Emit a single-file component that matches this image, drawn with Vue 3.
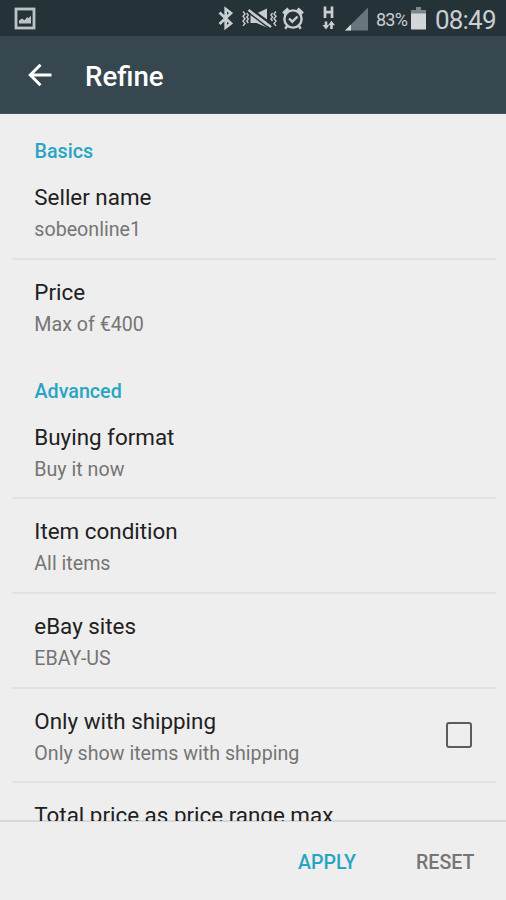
<script setup>
const sections = [
  {
    name: 'Basics',
    rows: [
      { title: 'Seller name', value: 'sobeonline1' },
      { title: 'Price', value: 'Max of €400' },
    ],
  },
  {
    name: 'Advanced',
    rows: [
      { title: 'Buying format', value: 'Buy it now' },
      { title: 'Item condition', value: 'All items' },
      { title: 'eBay sites', value: 'EBAY-US' },
      { title: 'Only with shipping', value: 'Only show items with shipping', checkbox: true },
      { title: 'Total price as price range max', value: '' },
    ],
  },
]
</script>

<template>
  <div class="screen">
    <div class="status">
      <svg class="picture" width="22" height="24" viewBox="0 0 22 24">
        <rect x="2" y="2" width="18" height="19" fill="none" stroke="#bcc3c7" stroke-width="2.8" />
        <path d="M5 16.5V13.5l3-2 2.6 1.8 2.6-3.3 1.4 1.2L17 8.5v8z" fill="#bcc3c7" />
      </svg>
      <svg class="icons" width="164" height="36" viewBox="0 0 164 36">
        <g fill="none" stroke="#c9ced0">
          <path d="M14.5 12.5l11.5 11-5.3 4V9l5.3 4-11.5 11" stroke-width="2.7" />
          <path d="M38 11.500l2 2.400-2 2.400 2 2.400-2 2.400 2 2.400-2 2.400M41.800 13l1.500 2-1.500 2 1.500 2-1.500 2 1.500 2" stroke-width="1.4" />
          <path d="M71 11.500l-2 2.400 2 2.400-2 2.400 2 2.400-2 2.400 2 2.400M67.500 13l-1.500 2 1.500 2-1.500 2 1.500 2" stroke-width="1.4" />
        </g>
        <path d="M45.500 13.500h6L62 8.500v19L51.500 23h-6z" fill="#c9ced0" />
        <path d="M45 8.500L67.500 25" stroke="#253238" stroke-width="2.5" />
        <path d="M43.500 10L66 27" stroke="#c9ced0" stroke-width="2.4" />
        <path d="M43 12.300L64.500 28.600" stroke="#253238" stroke-width="1.5" />
        <g fill="none" stroke="#c9ced0">
          <circle cx="88" cy="19" r="8.6" stroke-width="2.4" />
          <path d="M78.200 13.500l5.200-4.800M97.800 13.500l-5.200-4.800" stroke-width="3.200" />
          <path d="M82.500 25.500l-2.300 3.200M93.500 25.500l2.300 3.200M84 18.500l3.300 3.200 5.200-5.200" stroke-width="2.400" />
          <path d="M120 6.500v11.500M127 6.500v11.500M120 12.200h7" stroke-width="2.700" />
          <path d="M121 21.500v5M126.500 29v-5" stroke-width="2.600" />
        </g>
        <path d="M117.500 25h7L121 29.500zM123 25.200h7L126.500 20.700z" fill="#c9ced0" />
        <path d="M140 30.500L163 7.500v23z" fill="#69757b" />
        <path d="M140 30.500l6-6v6z" fill="#d4d8da" />
      </svg>
      <span class="percent">83%</span>
      <svg class="battery" width="15" height="24" viewBox="0 0 15 24">
        <path d="M0 3h5V0h5v3h5v5H0z" fill="#7c878c" />
        <path d="M0 6.500h15V22.500H0z" fill="#d3d7d9" />
      </svg>
      <span class="clock">08:49</span>
    </div>

    <header class="bar">
      <svg class="back" width="26" height="26" viewBox="0 0 26 26">
        <path d="M24.500 13H3.500M13.500 2.800L3.300 13l10.200 10.200" fill="none" stroke="#fff" stroke-width="3" />
      </svg>
      <h1>Refine</h1>
    </header>

    <main class="list">
      <section v-for="section in sections" :key="section.name">
        <h2>{{ section.name }}</h2>
        <div v-for="row in section.rows" :key="row.title" class="row">
          <div class="texts">
            <div class="title">{{ row.title }}</div>
            <div class="value">{{ row.value }}</div>
          </div>
          <span v-if="row.checkbox" class="checkbox"></span>
        </div>
      </section>
    </main>

    <footer class="actions">
      <span class="apply">APPLY</span>
      <span class="reset">RESET</span>
    </footer>
  </div>
</template>

<style>
body {
  overflow: hidden;
}
</style>

<style scoped>
.screen {
  width: 506px;
  height: 900px;
  display: flex;
  flex-direction: column;
  overflow: hidden;
  background: #eeeeee;
  font-family: Roboto, "Liberation Sans", sans-serif;
  box-sizing: border-box;
}
.status {
  flex: none;
  height: 36px;
  display: flex;
  align-items: center;
  background: #253238;
  color: #c9ced0;
  white-space: nowrap;
}
.picture {
  margin: 2px 0 0 14px;
}
.icons {
  margin-left: 169px;
}
.percent {
  width: 32px;
  margin: 3px 0 0 7px;
  font-size: 18px;
  letter-spacing: -0.8px;
}
.battery {
  margin: 1px 0 0 3px;
}
.clock {
  margin: 3px 0 0 9px;
  font-size: 26px;
  letter-spacing: -0.8px;
}
.bar {
  flex: none;
  height: 78px;
  display: flex;
  align-items: center;
  box-sizing: border-box;
  background: #37474f;
  border-bottom: 1px solid #46555c;
}
.back {
  margin-left: 27px;
}
h1 {
  margin: 4px 0 0 32px;
  font-size: 27.7px;
  line-height: 34px;
  font-weight: 500;
  color: #fff;
}
.list {
  flex: none;
  height: 707px;
  box-sizing: border-box;
  padding-top: 1px;
  overflow: hidden;
}
h2 {
  margin: 0;
  height: 50.2px;
  box-sizing: border-box;
  padding: 25.4px 0 0 34.5px;
  font-size: 19.7px;
  line-height: 24px;
  font-weight: 500;
  color: #28a5c4;
}
.row {
  height: 94.65px;
  box-sizing: border-box;
  margin: 0 10px 0 12px;
  padding: 0 24px 0 22.3px;
  display: flex;
  justify-content: space-between;
  border-bottom: 2px solid #e1e1e1;
}
section:first-child .row:last-child {
  border-bottom-color: transparent;
}
.title {
  padding-top: 17px;
  font-size: 22.4px;
  line-height: 30px;
  color: #212121;
  white-space: nowrap;
}
.value {
  margin-top: 6px;
  font-size: 19.65px;
  line-height: 24px;
  color: #757575;
  white-space: nowrap;
}
.checkbox {
  width: 26px;
  height: 26px;
  box-sizing: border-box;
  margin-top: 33px;
  border: 2px solid #5c5c5c;
  border-radius: 3px;
}
.actions {
  flex: 1;
  box-sizing: border-box;
  display: flex;
  justify-content: flex-end;
  align-items: center;
  gap: 60px;
  margin-top: -1px;
  padding: 2px 31.5px 0 0;
  border-top: 2px solid rgba(0, 0, 0, 0.09);
  font-size: 19.6px;
  font-weight: 500;
}
.apply {
  color: #28a5c4;
}
.reset {
  color: #757575;
}
</style>
